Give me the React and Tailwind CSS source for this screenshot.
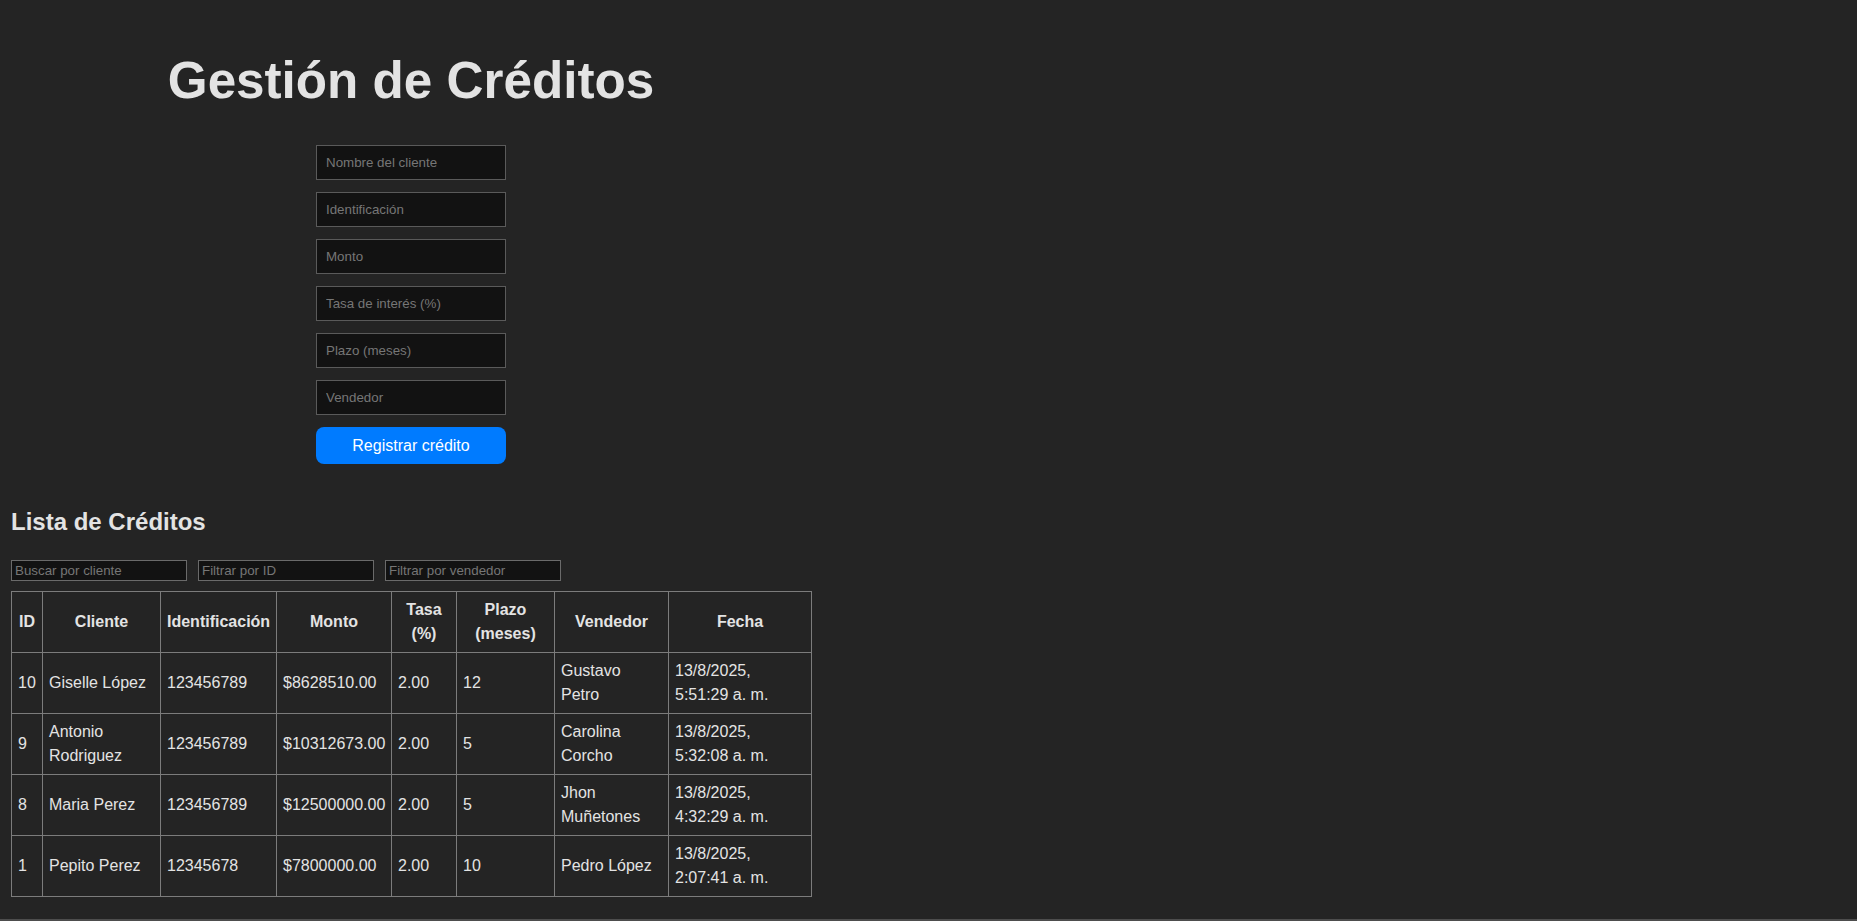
import React, { useState } from "react";

const creditos = [
  { id: 10, cliente: "Giselle López", identificacion: "123456789", monto: 8628510, tasa: 2, plazo: 12, vendedor: "Gustavo Petro", fecha: "13/8/2025, 5:51:29 a. m." },
  { id: 9, cliente: "Antonio Rodriguez", identificacion: "123456789", monto: 10312673, tasa: 2, plazo: 5, vendedor: "Carolina Corcho", fecha: "13/8/2025, 5:32:08 a. m." },
  { id: 8, cliente: "Maria Perez", identificacion: "123456789", monto: 12500000, tasa: 2, plazo: 5, vendedor: "Jhon Muñetones", fecha: "13/8/2025, 4:32:29 a. m." },
  { id: 1, cliente: "Pepito Perez", identificacion: "12345678", monto: 7800000, tasa: 2, plazo: 10, vendedor: "Pedro López", fecha: "13/8/2025, 2:07:41 a. m." },
];

const campos = [
  "Nombre del cliente",
  "Identificación",
  "Monto",
  "Tasa de interés (%)",
  "Plazo (meses)",
  "Vendedor",
];

const App = () => {
  const [busqueda, setBusqueda] = useState("");
  const [filtroId, setFiltroId] = useState("");
  const [filtroVendedor, setFiltroVendedor] = useState("");

  const lista = creditos
    .filter((c) => c.cliente.toLowerCase().includes(busqueda.toLowerCase()))
    .filter((c) => (filtroId === "" ? true : String(c.id).includes(filtroId)))
    .filter((c) => c.vendedor.toLowerCase().includes(filtroVendedor.toLowerCase()));

  const th = "border border-[#7c7c7c] px-1.5 py-1.5 font-bold text-center align-middle";
  const td = "border border-[#7c7c7c] px-1.5 py-1.5 text-left align-middle";

  return (
    <div
      className="min-h-[921px] bg-[#242424] text-[#e3e3e3] border-b-2 border-[#4d4d4d] leading-6"
      style={{ fontFamily: '"Liberation Sans", Arial, sans-serif' }}
    >
      <div className="pl-[11px] pt-[53px]">
        <div className="w-[800px]">
          <h1 className="text-center text-[51.2px] font-bold leading-[1.1]">Gestión de Créditos</h1>

          <form className="mt-[36px] flex flex-col items-center gap-3" onSubmit={(e) => e.preventDefault()}>
            {campos.map((campo) => (
              <input
                key={campo}
                type="text"
                placeholder={campo}
                className="w-[190px] h-[35px] px-[9px] bg-[#121212] border border-[#5a5a5a] text-[13.33px] text-[#e3e3e3] placeholder:text-[#767676] outline-none"
              />
            ))}
            <button
              type="submit"
              className="w-[190px] h-[37px] rounded-lg bg-[#007bff] text-white text-base"
            >
              Registrar crédito
            </button>
          </form>

          <h2 className="mt-[40px] text-2xl font-bold leading-9">Lista de Créditos</h2>

          <div className="mt-5 flex gap-[11px]">
            <input
              type="text"
              placeholder="Buscar por cliente"
              value={busqueda}
              onChange={(e) => setBusqueda(e.target.value)}
              className="w-[176px] h-[21px] px-[3px] bg-[#121212] border border-[#6a6a6a] text-[13.33px] placeholder:text-[#767676] outline-none"
            />
            <input
              type="text"
              placeholder="Filtrar por ID"
              value={filtroId}
              onChange={(e) => setFiltroId(e.target.value)}
              className="w-[176px] h-[21px] px-[3px] bg-[#121212] border border-[#6a6a6a] text-[13.33px] placeholder:text-[#767676] outline-none"
            />
            <input
              type="text"
              placeholder="Filtrar por vendedor"
              value={filtroVendedor}
              onChange={(e) => setFiltroVendedor(e.target.value)}
              className="w-[176px] h-[21px] px-[3px] bg-[#121212] border border-[#6a6a6a] text-[13.33px] placeholder:text-[#767676] outline-none"
            />
          </div>

          <table className="mt-[10px] w-[800px] table-fixed border-collapse text-base">
            <colgroup>
              <col className="w-[31px]" />
              <col className="w-[118px]" />
              <col className="w-[116px]" />
              <col className="w-[115px]" />
              <col className="w-[65px]" />
              <col className="w-[98px]" />
              <col className="w-[114px]" />
              <col className="w-[143px]" />
            </colgroup>
            <thead>
              <tr className="h-[61px]">
                <th className={th}>ID</th>
                <th className={th}>Cliente</th>
                <th className={th}>Identificación</th>
                <th className={th}>Monto</th>
                <th className={th}>Tasa (%)</th>
                <th className={th}>Plazo (meses)</th>
                <th className={th}>Vendedor</th>
                <th className={th}>Fecha</th>
              </tr>
            </thead>
            <tbody>
              {lista.map((c) => (
                <tr key={c.id} className="h-[61px]">
                  <td className={td}>{c.id}</td>
                  <td className={td}>{c.cliente}</td>
                  <td className={td}>{c.identificacion}</td>
                  <td className={`${td} whitespace-nowrap`}>${c.monto.toFixed(2)}</td>
                  <td className={td}>{c.tasa.toFixed(2)}</td>
                  <td className={td}>{c.plazo}</td>
                  <td className={td}>{c.vendedor}</td>
                  <td className={td}>{c.fecha}</td>
                </tr>
              ))}
            </tbody>
          </table>
        </div>
      </div>
    </div>
  );
};

export default App;
